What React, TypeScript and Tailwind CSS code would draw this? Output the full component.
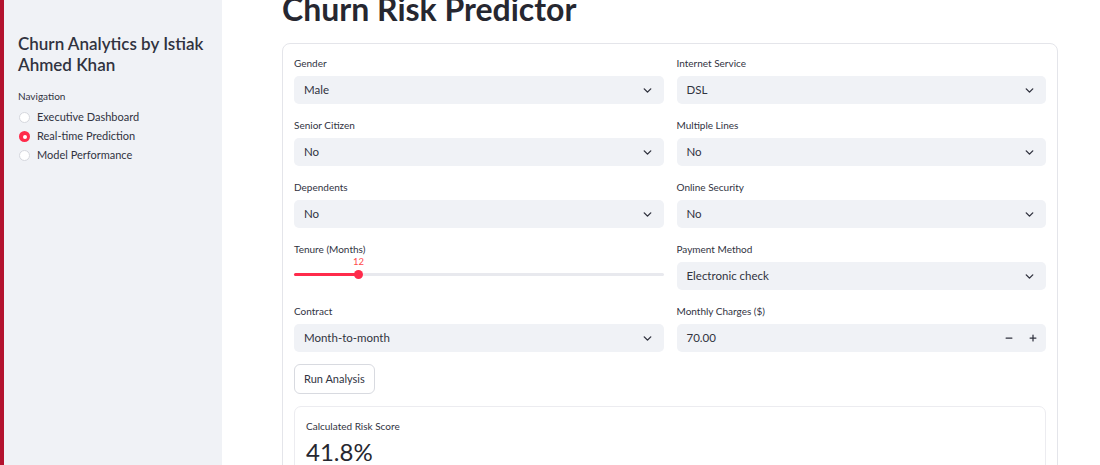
import { ChevronDown, Minus, Plus } from "lucide-react";

const FONT = { fontFamily: "Lato, 'Noto Sans', sans-serif" };

function Select({ label, value }: { label: string; value: string }) {
  return (
    <div className="flex flex-col">
      <div className="h-[13px] text-[10px] leading-[13px] text-[#31333f]">{label}</div>
      <div className="mt-[6px] flex h-[28px] items-center justify-between rounded-[5px] bg-[#f0f2f6] pl-[10px] pr-[10px] text-[11.5px] text-[#31333f]">
        <span>{value}</span>
        <ChevronDown className="h-[13px] w-[13px] text-[#31333f]" strokeWidth={2.6} />
      </div>
    </div>
  );
}

function TenureSlider() {
  return (
    <div className="flex flex-col">
      <div className="h-[13px] text-[10px] leading-[13px] text-[#31333f]">Tenure (Months)</div>
      <div className="relative mt-[6px] h-[28px]">
        <span className="absolute left-[59px] top-[-6px] text-[9.5px] leading-[12px] text-[#ff4b4b]">12</span>
        <div className="absolute left-0 right-0 top-[11px] flex h-[3px] rounded-full bg-[#e8e9ee]">
          <div className="h-full w-[64px] rounded-full bg-[#ff2b4b]" />
        </div>
        <span className="absolute left-[60px] top-[8px] h-[9px] w-[9px] rounded-full bg-[#ff2b4b]" />
      </div>
    </div>
  );
}

function NumberInput({ label, value }: { label: string; value: string }) {
  return (
    <div className="flex flex-col">
      <div className="h-[13px] text-[10px] leading-[13px] text-[#31333f]">{label}</div>
      <div className="mt-[6px] flex h-[28px] items-center justify-between rounded-[5px] bg-[#f0f2f6] pl-[10px] pr-[8px] text-[11.5px] text-[#31333f]">
        <span>{value}</span>
        <div className="flex items-center gap-[14px]">
          <Minus className="h-[10px] w-[10px]" strokeWidth={3} />
          <Plus className="h-[10px] w-[10px]" strokeWidth={3} />
        </div>
      </div>
    </div>
  );
}

function Radio({ label, checked }: { label: string; checked?: boolean }) {
  return (
    <div className="flex h-[19px] items-center gap-[7px]">
      {checked ? (
        <span className="flex h-[11px] w-[11px] items-center justify-center rounded-full bg-[#ff2b4b]">
          <span className="h-[4px] w-[4px] rounded-full bg-white" />
        </span>
      ) : (
        <span className="h-[11px] w-[11px] rounded-full border border-[#d6d8de] bg-white" />
      )}
      <span className="text-[11px] text-[#31333f]">{label}</span>
    </div>
  );
}

export default function App() {
  return (
    <div className="flex h-[465px] w-[1100px] overflow-hidden bg-white" style={FONT}>
      <aside className="flex w-[222px] shrink-0 border-l-[4px] border-[#b3122e] bg-[#f0f2f6]">
        <div className="flex flex-col pl-[14px] pt-[33px]">
          <h2 className="w-[196px] text-[17px] font-semibold leading-[21px] text-[#31333f]">
            Churn Analytics by Istiak Ahmed Khan
          </h2>
          <div className="mt-[15px] text-[10px] leading-[13px] text-[#31333f]">Navigation</div>
          <div className="mt-[5px] flex flex-col pl-[1px]">
            <Radio label="Executive Dashboard" />
            <Radio label="Real-time Prediction" checked />
            <Radio label="Model Performance" />
          </div>
        </div>
      </aside>
      <main className="flex flex-1 flex-col pl-[60px] pr-[42px]">
        <h1 className="mt-[-11px] h-[40px] whitespace-nowrap text-[32px] font-bold leading-[40px] text-[#262730]">
          Churn Risk Predictor
        </h1>
        <div className="mt-[14px] rounded-[8px] border border-[#e4e5ea] px-[11px] pt-[13px]">
          <div className="grid grid-cols-2 gap-x-[13px] gap-y-[15px]">
            <Select label="Gender" value="Male" />
            <Select label="Internet Service" value="DSL" />
            <Select label="Senior Citizen" value="No" />
            <Select label="Multiple Lines" value="No" />
            <Select label="Dependents" value="No" />
            <Select label="Online Security" value="No" />
            <TenureSlider />
            <Select label="Payment Method" value="Electronic check" />
            <Select label="Contract" value="Month-to-month" />
            <NumberInput label="Monthly Charges ($)" value="70.00" />
          </div>
          <button className="mt-[12px] h-[30px] rounded-[6px] border border-[#d8dae0] bg-white px-[9px] text-[11px] text-[#31333f]">
            Run Analysis
          </button>
          <div className="mt-[12px] h-[80px] rounded-[7px] border border-[#ececf0] px-[11px] pt-[13px]">
            <div className="text-[10px] leading-[13px] text-[#31333f]">Calculated Risk Score</div>
            <div className="mt-[3px] text-[24px] leading-[32px] text-[#262730]">41.8%</div>
          </div>
        </div>
      </main>
    </div>
  );
}
